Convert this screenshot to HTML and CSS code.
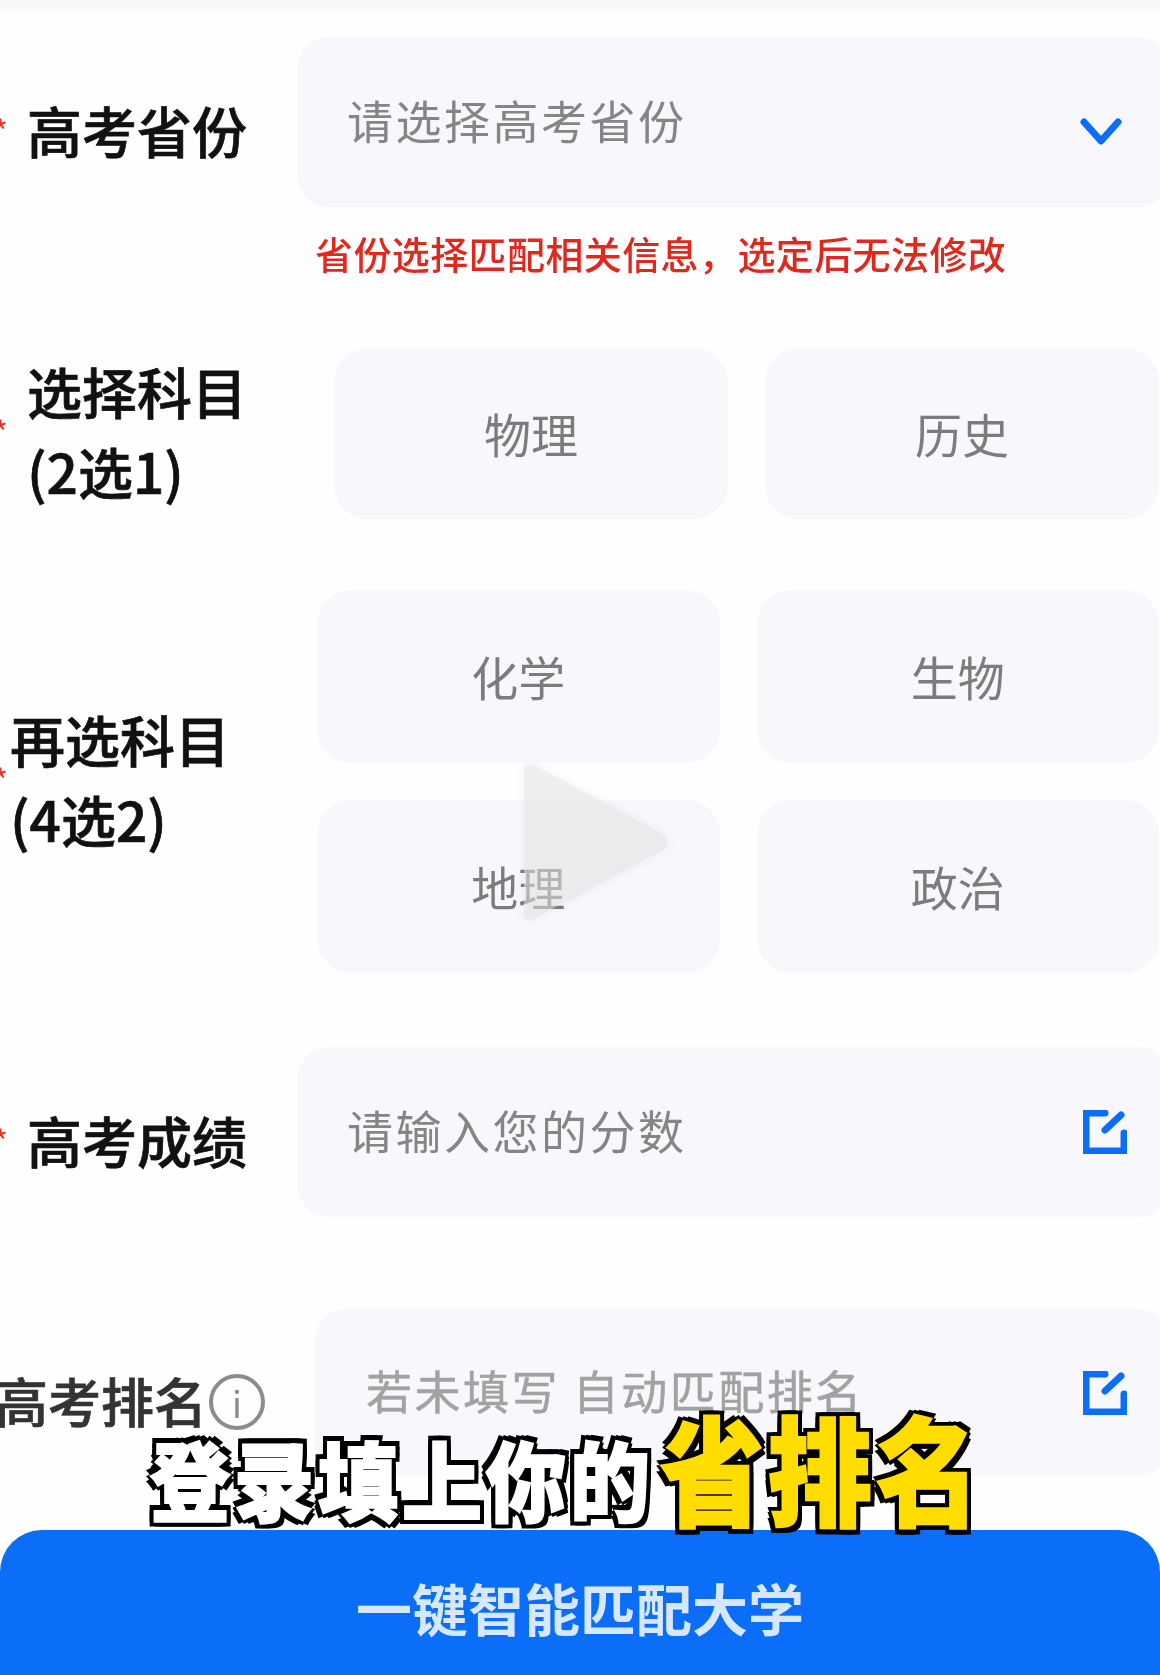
FILE: index.html
```html
<!DOCTYPE html>
<html lang="zh-CN">
<head>
    <meta charset="UTF-8">
    <meta name="viewport" content="width=device-width, initial-scale=1.0">
    <title>一键智能匹配大学</title>
    <link rel="stylesheet" href="styles.css">
</head>
<body>
    <div class="page">
        <div class="top-strip"></div>

        <div class="row row-province">
            <div class="label"><span class="star">*</span>高考省份</div>
            <div class="field">
                <span class="placeholder">请选择高考省份</span>
                <svg class="chevron" viewBox="0 0 42 28" fill="none" stroke="#0a6ef8" stroke-width="7" stroke-linecap="round" stroke-linejoin="round">
                    <path d="M4 4 L21 23 L38 4"/>
                </svg>
            </div>
        </div>
        <div class="note">省份选择匹配相关信息，选定后无法修改</div>

        <div class="row row-subject">
            <div class="label"><span class="star">*</span>选择科目<br>(2选1)</div>
            <div class="options">
                <div class="option">物理</div>
                <div class="option">历史</div>
            </div>
        </div>

        <div class="row row-elective">
            <div class="label"><span class="star">*</span>再选科目<br>(4选2)</div>
            <div class="options">
                <div class="option">化学</div>
                <div class="option">生物</div>
                <div class="option">地理</div>
                <div class="option">政治</div>
            </div>
        </div>

        <div class="row row-score">
            <div class="label"><span class="star">*</span>高考成绩</div>
            <div class="field">
                <span class="placeholder">请输入您的分数</span>
                <svg class="edit" viewBox="0 0 44 44" fill="none" stroke="#0a6ef8" stroke-width="7" stroke-linecap="round" stroke-linejoin="miter">
                    <path d="M22 3 H3 V41 H41 V23"/>
                    <path d="M22 20 L38 5"/>
                </svg>
            </div>
        </div>

        <div class="row row-rank">
            <div class="label">高考排名<span class="info">i</span></div>
            <div class="field">
                <span class="placeholder placeholder-light">若未填写 自动匹配排名</span>
                <svg class="edit" viewBox="0 0 44 44" fill="none" stroke="#0a6ef8" stroke-width="7" stroke-linecap="round" stroke-linejoin="miter">
                    <path d="M22 3 H3 V41 H41 V23"/>
                    <path d="M22 20 L38 5"/>
                </svg>
            </div>
        </div>

        <div class="submit">一键智能匹配大学</div>

        <!-- video overlays -->
        <svg class="play" viewBox="0 0 165 180">
            <path d="M22 20 L150 88 Q156 92 150 96 L22 164 Z" fill="#e2e2e2" stroke="#e2e2e2" stroke-width="12" stroke-linejoin="round"/>
        </svg>
        <div class="caption"><span class="caption-plain">登录填上你的</span><span class="caption-hot">省排名</span></div>
    </div>
</body>
</html>
```

FILE: styles.css
```css
html, body {
    height: 1675px;
    overflow: hidden;
}
body {
    margin: 0;
    background: #fff;
    font-family: "Noto Sans CJK SC", "Noto Sans", sans-serif;
}
.page {
    position: relative;
    width: 1160px;
    height: 1690px;
    overflow: hidden;
    background: #fefefe;
    filter: blur(0.6px);
}
.top-strip {
    height: 13px;
    background: linear-gradient(#f6f6f6, #fbfbfb);
}
.row {
    display: flex;
    align-items: center;
}
.label {
    position: relative;
    flex: none;
    font-size: 55px;
    font-weight: 500;
    line-height: 80px;
    color: #111;
    white-space: nowrap;
    -webkit-text-stroke: 0.7px #111;
}
.star {
    position: absolute;
    top: 50%;
    left: -34px;
    margin-top: -19px;
    font-size: 32px;
    font-weight: 400;
    line-height: 40px;
    color: #e8302a;
    -webkit-text-stroke: 0;
}
.field {
    flex: 1;
    display: flex;
    align-items: center;
    justify-content: space-between;
    height: 170px;
    margin-right: -8px;
    padding: 0 41px 0 49px;
    background: #f8f8fc;
    border-radius: 30px;
}
.placeholder {
    margin-top: -7px;
    font-size: 46px;
    letter-spacing: 2.5px;
    color: #858585;
}
.placeholder-light {
    padding-left: 2px;
    color: #a2a2a2;
    -webkit-text-stroke: 0.5px #a2a2a2;
}
.chevron {
    width: 42px;
    height: 28px;
    margin-top: 19px;
    margin-right: 5px;
}
.edit {
    width: 44px;
    height: 44px;
}
.row-province {
    margin-top: 24px;
    padding-left: 27px;
}
.row-province .label,
.row-score .label {
    width: 271px;
    margin-top: 13px;
}
.note {
    margin-top: 21px;
    padding-left: 315px;
    font-size: 38px;
    font-weight: 500;
    letter-spacing: 0.4px;
    line-height: 50px;
    color: #e0281f;
}
.options {
    flex: 1;
    display: grid;
    grid-template-columns: 1fr 1fr;
    gap: 37px;
}
.option {
    display: flex;
    align-items: center;
    justify-content: center;
    box-sizing: border-box;
    height: 171px;
    padding-bottom: 3px;
    background: #f8f8fc;
    border-radius: 34px;
    font-size: 47px;
    color: #7c7c7c;
}
.row-subject {
    margin-top: 70px;
    padding: 0 1px 0 27px;
}
.row-subject .label {
    width: 307px;
    margin-top: -8px;
}
.row-elective {
    margin-top: 71px;
    padding: 0 1px 0 10px;
}
.row-elective .label {
    width: 307px;
    margin-top: -8px;
}
.row-elective .star {
    left: -17px;
}
.row-elective .option {
    height: 173px;
}
.row-score {
    margin-top: 74px;
    padding-left: 27px;
}
.row-rank {
    margin-top: 92px;
}
.row-rank .label {
    display: flex;
    align-items: center;
    width: 320px;
    margin-left: -5px;
    margin-top: 15px;
    font-size: 53px;
    color: #333;
    -webkit-text-stroke: 0.7px #333;
}
.row-rank .field {
    height: 167px;
}
.info {
    display: flex;
    align-items: center;
    justify-content: center;
    box-sizing: border-box;
    width: 56px;
    height: 56px;
    margin: 4px 0 0 2px;
    border: 4px solid #8c8c8c;
    border-radius: 50%;
    font-size: 36px;
    font-weight: 400;
    color: #8c8c8c;
    -webkit-text-stroke: 0;
}
.submit {
    display: flex;
    align-items: center;
    justify-content: center;
    box-sizing: border-box;
    height: 160px;
    margin-top: 54px;
    padding-bottom: 7px;
    background: #0a6ef8;
    border-radius: 42px 42px 0 0;
    font-size: 56px;
    font-weight: 700;
    color: #d6e7ff;
}
.play {
    position: absolute;
    left: 508px;
    top: 750px;
    width: 165px;
    height: 180px;
    opacity: 0.55;
    filter: drop-shadow(0 0 6px rgba(0, 0, 0, 0.1));
}
.caption {
    position: absolute;
    left: 150px;
    top: 1405px;
    display: flex;
    align-items: flex-end;
    font-weight: 900;
    line-height: 130px;
    white-space: nowrap;
    text-shadow: 5px 0 #000, -5px 0 #000, 0 5px #000, 0 -5px #000,
        5px 5px #000, -5px 5px #000, 5px -5px #000, -5px -5px #000;
}
.caption-plain {
    font-size: 80px;
    letter-spacing: 4px;
    color: #fff;
    -webkit-text-stroke: 2px #fff;
    transform: translateY(7px) scaleY(1.08);
}
.caption-hot {
    margin-left: 6px;
    font-size: 104px;
    letter-spacing: 4px;
    color: #ffdd00;
    -webkit-text-stroke: 2px #ffdd00;
    transform: translateY(-4px) scaleY(1.14);
}
```
